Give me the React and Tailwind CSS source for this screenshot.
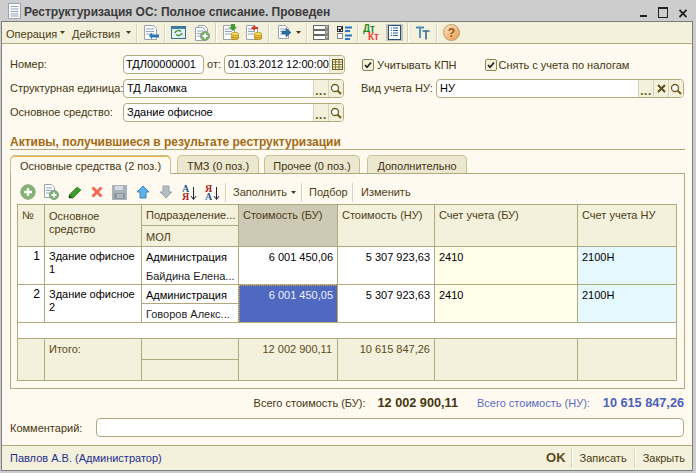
import React from 'react';

const Sep = ({ className = '' }) => <div className={`w-px h-[19px] bg-[#d8d3b8] border-r border-white box-content ${className}`} />;
const Arrow = ({ className = '', color = '#4a3a10' }) => (
  <svg width="5" height="3" viewBox="0 0 5 3" className={className}><path d="M0 0h5L2.5 3z" fill={color} /></svg>
);
const Sv = ({ w = 16, h = 16, className = '', children }) => (
  <svg width={w} height={h} viewBox={`0 0 ${w} ${h}`} className={`shrink-0 ${className}`}>{children}</svg>
);
const Coins = ({ x = 8, y = 10 }) => (
  <g>
    <ellipse cx={x + 4} cy={y + 5} rx="4" ry="1.6" fill="#e2b52c" stroke="#a67c12" strokeWidth=".6" />
    <ellipse cx={x + 4} cy={y + 3} rx="4" ry="1.6" fill="#f0c93c" stroke="#a67c12" strokeWidth=".6" />
    <ellipse cx={x + 4} cy={y + 1} rx="4" ry="1.6" fill="#f8dc5c" stroke="#a67c12" strokeWidth=".6" />
  </g>
);
const Doc = ({ x = 1, y = 0, w = 11, h = 14 }) => (
  <g>
    <path d={`M${x + .5} ${y + .5}h${w - 3}l3 3v${h - 3}h-${w}z`} fill="#fdfdfd" stroke="#9aa4ae" />
    <path d={`M${x + 2} ${y + 4}h${w - 4}M${x + 2} ${y + 6.5}h${w - 4}M${x + 2} ${y + 9}h${w - 4}`} stroke="#8fa6bd" />
  </g>
);
const PlusBall = ({ cx, cy, r = 4.5 }) => (
  <g>
    <circle cx={cx} cy={cy} r={r} fill="#77b36c" stroke="#8a9a84" />
    <path d={`M${cx - r + 2} ${cy}h${2 * r - 4}M${cx} ${cy - r + 2}v${2 * r - 4}`} stroke="#fff" strokeWidth="1.8" />
  </g>
);
const SortIcon = ({ top, bottom, topC, botC, className = '' }) => (
  <Sv w={15} h={17} className={className}>
    <text x="0" y="8" fontSize="10" fontWeight="700" fontFamily='"Liberation Serif", serif' fill={topC}>{top}</text>
    <text x="0" y="16" fontSize="10" fontWeight="700" fontFamily='"Liberation Serif", serif' fill={botC}>{bottom}</text>
    <path d="M11.5 3v12M9 12l2.5 3.5L14 12" fill="none" stroke="#223" strokeWidth="1" />
  </Sv>
);

const Labeled = ({ className = '', children }) => <span className={`text-[#43360f] ${className}`}>{children}</span>;

const Field = ({ value, w, children, className = '' }) => (
  <div className={`flex h-[19px] border border-[#b3a97f] rounded-[4px] bg-white overflow-hidden ${className}`} style={w ? { width: w } : undefined}>
    <div className="flex-1 min-w-0 pl-[3px] leading-[17px] text-black whitespace-nowrap overflow-hidden">{value}</div>
    {children}
  </div>
);
const FBtn = ({ children, w = 'w-[15px]' }) => (
  <div className={`${w} shrink-0 bg-[#f3f0dc] border-l border-[#d8d3b8] flex items-center justify-center`}>{children}</div>
);
const Dots = () => <span className="text-[12px] font-bold leading-none text-[#6b5a20] mt-[4px] tracking-[0.5px]">...</span>;
const Mag = () => (
  <Sv w={12} h={12}>
    <circle cx="5" cy="5" r="3.5" fill="#fff" stroke="#6e5c1e" strokeWidth="1.3" />
    <path d="M7.5 7.5l3.5 3.5" stroke="#6e5c1e" strokeWidth="2" />
  </Sv>
);
const Check = () => (
  <div className="w-[12px] h-[12px] border border-[#8d8254] rounded-[2px] bg-[#f3f0dc] flex items-center justify-center shrink-0">
    <svg width="8" height="8" viewBox="0 0 8 8"><path d="M1 4l2 2.2L7 1.5" fill="none" stroke="#222" strokeWidth="1.7" /></svg>
  </div>
);

const cols = 'grid grid-cols-[27px_97px_97px_99px_97px_143px_99px]';
const bc = 'border-r border-b border-[#b3a97f]';

const Row = ({ n, ml, selected }) => (
  <div className={`${cols} h-[38px] overflow-hidden`}>
    <div className={`${bc} bg-white text-right pr-[4px] pt-[2px] text-[12px] text-black`}>{n}</div>
    <div className={`${bc} bg-white pl-[4px] pt-[3px] leading-[13px] text-black whitespace-nowrap`}>Здание офисное<br />{n}</div>
    <div className={`${bc} bg-white flex flex-col`}>
      <div className={`h-[19px] pl-[4px] pt-[3px] text-black ${n === 2 ? 'border-b border-[#b3a97f]' : ''}`}>Администрация</div>
      <div className="pl-[4px] pt-[3px] text-[#1e1e1e] whitespace-nowrap">{ml}</div>
    </div>
    <div className={`${bc} text-right pr-[4px] pt-[3px] ${selected ? 'bg-[#5069c0] text-[#eef0ff] outline-1 outline-dotted -outline-offset-1 outline-[#c9a94a]' : 'bg-white text-black'}`}>6 001 450,0{n === 1 ? 6 : 5}</div>
    <div className={`${bc} bg-white text-right pr-[4px] pt-[3px] text-black`}>5 307 923,63</div>
    <div className={`${bc} bg-[#fffee9] pl-[4px] pt-[3px] text-black`}>2410</div>
    <div className={`${bc} bg-[#e4f8fe] pl-[4px] pt-[3px] text-black`}>2100Н</div>
  </div>
);

export default function App() {
  return (
    <div className="w-[696px] h-[473px] bg-[#cdcdcd] overflow-hidden flex flex-col text-[11px] leading-[14px]" style={{ fontFamily: '"Liberation Sans", Arial, sans-serif' }}>
      {/* title bar */}
      <div className="h-[21px] flex items-center shrink-0">
        <Sv w={16} h={16} className="ml-[7px]">
          <path d="M1.5 .5h12v15h-12z" fill="#fff" stroke="#97a3b0" />
          <path d="M3.5 3.5h8M3.5 6h8M3.5 8.5h8M3.5 11h8M3.5 13h8" stroke="#8ea0b5" />
        </Sv>
        <span className="ml-[1px] mt-[2px] font-bold text-[12px] text-[#3a3a3a] whitespace-nowrap">Реструктуризация ОС: Полное списание. Проведен</span>
        <div className="ml-auto mr-[9px] mt-[3px] flex items-end gap-[11px]">
          <div className="w-[7px] h-[2px] bg-[#222] mb-[1px]" />
          <div className="w-[10px] h-[11px] border border-[#222] border-t-2" />
          <svg width="8" height="9" viewBox="0 0 8 9"><path d="M.5 1l7 7M7.5 1l-7 7" stroke="#222" strokeWidth="1.8" /></svg>
        </div>
      </div>

      {/* window */}
      <div className="ml-[1px] mr-[3px] h-[450px] border border-[#7d7d7d] bg-[#fffaf0] flex flex-col shrink-0">
        {/* toolbar */}
        <div className="h-[22px] shrink-0 bg-[#f3f0dc] border-b border-[#b3a97f] flex items-center text-[#4c3d13]">
          <span className="ml-[4px] mt-[2px] w-[49px] whitespace-nowrap">Операция</span>
          <Arrow className="ml-[5px]" />
          <span className="ml-[7px] mt-[2px] w-[49px] whitespace-nowrap">Действия</span>
          <Arrow className="ml-[5px]" />
          <Sep className="ml-[5px]" />
          <Sv w={17} h={16} className="ml-[5px]">
            <Doc x={1} y={0} w={12} h={14} />
            <path d="M6 10.5l3-3v2h7v3H9v2z" fill="#2b78b8" />
          </Sv>
          <Sep className="ml-[4px]" />
          <Sv w={15} h={13} className="ml-[5px]">
            <rect x=".5" y=".5" width="14" height="12" fill="#e8f0f4" stroke="#3f6f8f" />
            <rect x="1" y="1" width="13" height="2" fill="#3f7fa8" />
            <path d="M4 7a3.5 3 0 0 1 6-1.5M11 7a3.5 3 0 0 1-6 1.5" fill="none" stroke="#3f9a3c" strokeWidth="1.4" />
          </Sv>
          <Sv w={15} h={16} className="ml-[9px]">
            <Doc x={3} y={0} w={9} h={13} />
            <Doc x={0} y={2} w={10} h={13} />
            <PlusBall cx={10} cy={11} />
          </Sv>
          <Sep className="ml-[5px]" />
          <Sv w={17} h={17} className="ml-[6px]">
            <Doc x={0} y={1} w={11} h={14} />
            <path d="M8 0h4v3h2l-4 4-4-4h2z" fill="#3f9a2e" />
            <Coins x={8} y={9} />
          </Sv>
          <Sv w={17} h={17} className="ml-[6px]">
            <Doc x={0} y={1} w={11} h={14} />
            <path d="M9 1l-4 3 4 3V5h3V3H9z" fill="#d9342a" />
            <Coins x={8} y={9} />
          </Sv>
          <Sep className="ml-[5px]" />
          <Sv w={16} h={15} className="ml-[7px]">
            <Doc x={1} y={0} w={10} h={13} />
            <path d="M5 6h4V3l5 4.5-5 4.5V9H5z" fill="#2c6fa8" stroke="#1e4f7c" strokeWidth=".5" />
          </Sv>
          <Arrow className="ml-[3px]" />
          <Sep className="ml-[5px]" />
          <Sv w={16} h={15} className="ml-[5px]">
            <rect x=".5" y=".5" width="15" height="4" fill="#fff" stroke="#666" />
            <rect x=".5" y="5.5" width="15" height="4" fill="#fff" stroke="#666" />
            <rect x=".5" y="10.5" width="15" height="4" fill="#fff" stroke="#666" />
            <path d="M12 0h3.5v15H12z" fill="#888" />
            <path d="M13 2h1.5M13 7h1.5M13 12h1.5" stroke="#fff" />
          </Sv>
          <Sv w={16} h={15} className="ml-[8px]">
            <rect x=".5" y="1.5" width="5" height="5" fill="#fff" stroke="#333" />
            <path d="M1.5 4l1.5 1.5L5.5 2" fill="none" stroke="#000" strokeWidth="1.2" />
            <rect x=".5" y="8.5" width="5" height="5" fill="#fff" stroke="#888" />
            <path d="M8 2.5h7M8 6h5M8 10.5h7M8 14h5" stroke="#2d6fd0" strokeWidth="1.8" />
          </Sv>
          <Sep className="ml-[4px]" />
          <Sv w={18} h={17} className="ml-[4px]">
            <text x="0" y="8" fontSize="10" fontWeight="700" fill="#2e8b1e">Дт</text>
            <text x="5" y="16" fontSize="10" fontWeight="700" fill="#f04040">Кт</text>
          </Sv>
          <Sv w={17} h={17} className="ml-[5px]">
            <rect width="17" height="17" fill="#c3c3b8" />
            <rect x="2.5" y="1.5" width="12" height="14" fill="#fff" stroke="#24507a" />
            <path d="M5 4h1M7 4h5M5 6.5h1M7 6.5h5M5 9h1M7 9h5M5 11.5h1M7 11.5h5" stroke="#24608f" />
          </Sv>
          <Sep className="ml-[4px]" />
          <Sv w={14} h={14} className="ml-[7px]">
            <path d="M0 1.5h8M4 1.5V12" stroke="#4a8ab0" strokeWidth="1.8" />
            <path d="M6.5 5h7M10 5v8.5" stroke="#2c6c94" strokeWidth="1.6" />
          </Sv>
          <Sep className="ml-[6px]" />
          <div className="ml-[5px] w-[17px] h-[17px] rounded-full border border-[#b89b6a] bg-gradient-to-br from-[#fde4c0] to-[#eb9c4c] flex items-center justify-center text-[#8a5a20] font-bold text-[12px]">?</div>
        </div>

        {/* form */}
        <div className="flex flex-col flex-1 min-h-0">
          <div className="flex mt-[11px] h-[19px]">
            <Labeled className="ml-[8px] w-[113px] leading-[19px]">Номер:</Labeled>
            <div className="w-[81px] h-[19px] border border-[#b3a97f] rounded-[4px] bg-white leading-[17px] pl-[2px] text-black whitespace-nowrap overflow-hidden">ТДЛ00000001</div>
            <Labeled className="ml-[3px] w-[17px] leading-[19px]">от:</Labeled>
            <Field value="01.03.2012 12:00:00" w="121px">
              <FBtn>
                <Sv w={11} h={11}>
                  <rect x=".5" y=".5" width="10" height="10" fill="#f7f3dc" stroke="#6e5c1e" />
                  <path d="M.5 3h10M.5 5.5h10M.5 8h10M3.5 1v9M7 1v9" stroke="#6e5c1e" strokeWidth=".8" />
                </Sv>
              </FBtn>
            </Field>
            <div className="ml-[17px] flex items-center">
              <Check />
              <Labeled className="ml-[3px]">Учитывать КПН</Labeled>
            </div>
            <div className="ml-[28px] flex items-center">
              <Check />
              <Labeled className="ml-[2px]">Снять с учета по налогам</Labeled>
            </div>
          </div>
          <div className="flex mt-[5px] h-[19px]">
            <Labeled className="ml-[8px] w-[113px] leading-[19px] whitespace-nowrap">Структурная единица:</Labeled>
            <Field value="ТД Лакомка" w="221px">
              <FBtn w="w-[15px]"><Dots /></FBtn>
              <FBtn w="w-[15px]"><Mag /></FBtn>
            </Field>
            <Labeled className="ml-[17px] w-[75px] leading-[19px] whitespace-nowrap">Вид учета НУ:</Labeled>
            <Field value="НУ" w="248px">
              <FBtn w="w-[15px]"><Dots /></FBtn>
              <FBtn w="w-[15px]"><svg width="9" height="9" viewBox="0 0 9 9"><path d="M1 1l7 7M8 1L1 8" stroke="#5e4e18" strokeWidth="2" /></svg></FBtn>
              <FBtn w="w-[15px]"><Mag /></FBtn>
            </Field>
          </div>
          <div className="flex mt-[5px] h-[19px]">
            <Labeled className="ml-[8px] w-[113px] leading-[19px] whitespace-nowrap">Основное средство:</Labeled>
            <Field value="Здание офисное" w="221px">
              <FBtn w="w-[15px]"><Dots /></FBtn>
              <FBtn w="w-[15px]"><Mag /></FBtn>
            </Field>
          </div>

          {/* section */}
          <div className="ml-[8px] mr-[7px] mt-[12px] border-b border-[#b3a97f] h-[16px] pt-[2px] font-bold text-[12px] text-[#a26a14] leading-[13px] whitespace-nowrap">Активы, получившиеся в результате реструктуризации</div>

          {/* tabs */}
          <div className="ml-[8px] mr-[7px] mt-[5px] h-[18px] flex items-start text-[#3f3210] shrink-0">
            <div className="w-[161px] h-[19px] z-10 relative bg-[#fffaf0] border border-b-0 border-[#c8bf92] rounded-t-[5px] text-center leading-[20px] shadow-[inset_0_1px_0_#f0b040]">Основные средства (2 поз.)</div>
            <div className="ml-[6px] w-[82px] h-[18px] bg-[#ece8d0] border border-b-0 border-[#c8bf92] rounded-t-[5px] text-center leading-[20px]">ТМЗ (0 поз.)</div>
            <div className="ml-[5px] w-[96px] h-[18px] bg-[#ece8d0] border border-b-0 border-[#c8bf92] rounded-t-[5px] text-center leading-[20px]">Прочее (0 поз.)</div>
            <div className="ml-[7px] w-[100px] h-[18px] bg-[#ece8d0] border border-b-0 border-[#c8bf92] rounded-t-[5px] text-center leading-[20px]">Дополнительно</div>
          </div>
          <div className="ml-[8px] mr-[7px] h-[216px] border border-[#b3a97f] flex flex-col shrink-0">
            {/* table toolbar */}
            <div className="h-[30px] pt-[6px] shrink-0 flex items-center text-[#4c3d13]">
              <Sv w={16} h={16} className="ml-[9px]">
                <circle cx="8" cy="8" r="7.3" fill="#7fb56f" stroke="#9aa58f" />
                <path d="M4 8h8M8 4v8" stroke="#fff" strokeWidth="2.4" />
              </Sv>
              <Sv w={15} h={16} className="ml-[8px]">
                <Doc x={0} y={0} w={10} h={13} />
                <PlusBall cx={10} cy={11} />
              </Sv>
              <Sv w={14} h={14} className="ml-[9px]">
                <path d="M1 10L9 2l4 3-8 8H1z" fill="#3f9a2e" stroke="#2a6e1e" strokeWidth=".6" />
                <path d="M1 10l0 3h4z" fill="#1e4d16" />
              </Sv>
              <svg width="12" height="12" viewBox="0 0 12 12" className="ml-[9px] shrink-0"><path d="M1.5 1.5l9 9M10.5 1.5l-9 9" stroke="#f06a58" strokeWidth="3" /></svg>
              <Sv w={15} h={15} className="ml-[9px]">
                <rect width="15" height="15" fill="#a9b2b8" />
                <rect x="3" y="1" width="8" height="4" fill="#d5dade" />
                <rect x="2" y="8" width="11" height="6" fill="#8d979e" />
                <path d="M5 10h6M5 12h6" stroke="#d5dade" />
              </Sv>
              <Sv w={14} h={14} className="ml-[9px]">
                <path d="M7 1l6 6H10v6H4V7H1z" fill="#62b0ea" stroke="#3d86c0" />
              </Sv>
              <Sv w={14} h={14} className="ml-[9px]">
                <path d="M7 13l6-6H10V1H4v6H1z" fill="#b5bcc2" stroke="#9aa2a9" />
              </Sv>
              <SortIcon className="ml-[9px]" top="А" bottom="Я" topC="#1f5c9c" botC="#aa2222" />
              <SortIcon className="ml-[8px]" top="Я" bottom="А" topC="#aa2222" botC="#1f5c9c" />
              <Sep className="ml-[5px]" />
              <span className="ml-[6px] w-[54px] whitespace-nowrap">Заполнить</span>
              <Arrow className="ml-[4px]" />
              <Sep className="ml-[5px]" />
              <span className="ml-[6px] w-[38px] whitespace-nowrap">Подбор</span>
              <Sep className="ml-[5px]" />
              <span className="ml-[7px]">Изменить</span>
            </div>

            {/* table */}
            <div className="ml-[6px] w-[660px] border-l border-t border-[#b3a97f] flex flex-col">
              <div className={`${cols} h-[42px] text-[#4c3d13]`}>
                <div className={`${bc} bg-[#f3f0dc] pl-[4px] pt-[3px]`}>№</div>
                <div className={`${bc} bg-[#f3f0dc] pl-[4px] pt-[5px] leading-[13px]`}>Основное<br />средство</div>
                <div className={`${bc} bg-[#f3f0dc] flex flex-col`}>
                  <div className="h-[21px] border-b border-[#b3a97f] pl-[4px] pt-[3px] whitespace-nowrap overflow-hidden">Подразделение...</div>
                  <div className="pl-[4px] pt-[4px]">МОЛ</div>
                </div>
                <div className={`${bc} bg-[#cdc9b4] pl-[4px] pt-[3px]`}>Стоимость (БУ)</div>
                <div className={`${bc} bg-[#f3f0dc] pl-[4px] pt-[3px]`}>Стоимость (НУ)</div>
                <div className={`${bc} bg-[#f3f0dc] pl-[4px] pt-[3px]`}>Счет учета (БУ)</div>
                <div className={`${bc} bg-[#f3f0dc] pl-[4px] pt-[3px]`}>Счет учета НУ</div>
              </div>
              <Row n={1} ml="Байдина Елена..." />
              <Row n={2} ml="Говоров Алекс..." selected />
              <div className="h-[16px] bg-white border-r border-b border-[#b3a97f]" />
              <div className={`${cols} h-[42px] text-[#5c4a1a]`}>
                <div className={`${bc} bg-[#f3f0dc]`} />
                <div className={`${bc} bg-[#f3f0dc] pl-[4px] pt-[3px]`}>Итого:</div>
                <div className={`${bc} bg-[#f3f0dc] flex flex-col`}>
                  <div className="h-[21px] border-b border-[#b3a97f]" />
                </div>
                <div className={`${bc} bg-[#f3f0dc] text-right pr-[5px] pt-[3px]`}>12 002 900,11</div>
                <div className={`${bc} bg-[#f3f0dc] text-right pr-[4px] pt-[3px]`}>10 615 847,26</div>
                <div className={`${bc} bg-[#f3f0dc]`} />
                <div className={`${bc} bg-[#f3f0dc]`} />
              </div>
            </div>
          </div>

          {/* totals */}
          <div className="mt-[7px] mr-[8px] h-[14px] flex justify-end items-center whitespace-nowrap">
            <Labeled>Всего стоимость (БУ):</Labeled>
            <span className="ml-[12px] font-bold text-[12.7px] text-[#43360f]">12 002 900,11</span>
            <span className="ml-[19px] text-[#5a6cc4]">Всего стоимость (НУ):</span>
            <span className="ml-[13px] font-bold text-[12.7px] text-[#4a60bc]">10 615 847,26</span>
          </div>
          <div className="mt-[8px] flex items-center h-[19px]">
            <Labeled className="ml-[8px] w-[86px]">Комментарий:</Labeled>
            <div className="w-[588px] h-[19px] border border-[#b3a97f] rounded-[4px] bg-white" />
          </div>

          {/* footer */}
          <div className="mt-auto h-[25px] bg-[#f3f0dc] border-t border-[#b3a97f] flex items-center">
            <span className="ml-[8px] text-[#1f2f8f]">Павлов А.В. (Администратор)</span>
            <span className="ml-auto font-bold text-[13px] text-[#5c4a1a]">OK</span>
            <Sep className="ml-[5px]" />
            <span className="ml-[7px] text-[#4c3d13]">Записать</span>
            <Sep className="ml-[7px]" />
            <span className="ml-[7px] mr-[7px] text-[#4c3d13]">Закрыть</span>
          </div>
        </div>
      </div>
    </div>
  );
}
